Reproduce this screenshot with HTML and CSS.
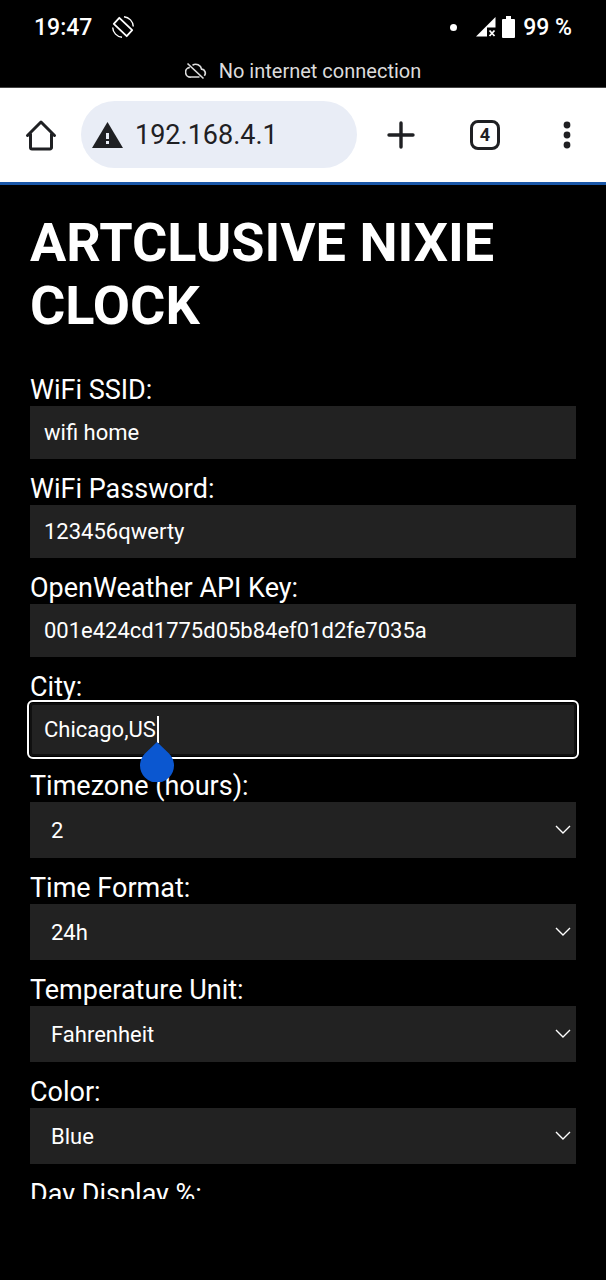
FILE: index.html
```html
<!DOCTYPE html>
<html lang="en">
<head>
  <meta charset="UTF-8">
  <meta name="viewport" content="width=device-width, initial-scale=1.0">
  <title>Artclusive Nixie Clock</title>
  <link rel="stylesheet" href="styles.css">
</head>
<body>
  <!-- Status bar -->
  <header class="status-bar">
    <div class="status-row">
      <span class="status-time">19:47</span>
      <svg class="rotate-icon" width="24" height="24" viewBox="0 0 24 24" fill="none" stroke="currentColor">
        <path d="M8.300 2.800 21.200 15.200 15.700 21.200 2.800 8.800Z" stroke-width="1.800" stroke-linejoin="round"/>
        <path d="M13 1.700A10.300 10.300 0 0 1 22.300 11.500M1.700 12.500A10.300 10.300 0 0 0 11 22.300" stroke-width="1.400"/>
      </svg>
      <div class="status-right">
        <span class="status-dot"></span>
        <svg width="20" height="20" viewBox="0 0 20 20" fill="currentColor">
          <path d="M19.500 0V10.500H11V19.500H0Z"/>
          <path d="m13.500 13.500 5 5.500m0-5.500-5 5.500" stroke="currentColor" stroke-width="1.800"/>
        </svg>
        <svg class="battery-icon" width="13" height="22" viewBox="0 0 13 22" fill="currentColor">
          <path d="M4 0h5v3h3a1 1 0 0 1 1 1v17a1 1 0 0 1-1 1H1a1 1 0 0 1-1-1V4a1 1 0 0 1 1-1h3Z"/>
        </svg>
        <span>99 %</span>
      </div>
    </div>
    <div class="connection">
      <svg width="22" height="18" viewBox="0 0 22 18" fill="none" stroke="currentColor" stroke-width="1.700">
        <path d="M7.500 3.200A6 6 0 0 1 16.600 7.200 4 4 0 0 1 19.300 13.800M4.800 5.400A4.800 4.800 0 0 0 6 15H14.500M2.500 1.500 18.500 16.500"/>
      </svg>
      <span>No internet connection</span>
    </div>
  </header>

  <!-- Browser toolbar -->
  <nav class="toolbar">
    <button class="tool-btn" type="button" aria-label="Home">
      <svg width="32" height="32" viewBox="0 0 32 32" fill="none" stroke="currentColor" stroke-width="3" stroke-linejoin="round" stroke-linecap="round">
        <path d="M2.500 16.500 16 3 29.500 16.500M5.500 15V28.500a1.500 1.500 0 0 0 1.500 1.500H25a1.500 1.500 0 0 0 1.500-1.500V15"/>
      </svg>
    </button>
    <label class="address">
      <svg width="31" height="26" viewBox="0 0 31 26">
        <path d="M15.500 0 31 26H0Z" fill="#1f2023"/>
        <path d="M14 11h3v6h-3zm0 8h3v3h-3z" fill="#e9edf6"/>
      </svg>
      <input type="text" value="192.168.4.1" aria-label="Address">
    </label>
    <button class="tool-btn" type="button" aria-label="New tab">
      <svg width="28" height="28" viewBox="0 0 28 28" stroke="currentColor" stroke-width="3.400" stroke-linecap="round">
        <path d="M14 2v24M2 14h24"/>
      </svg>
    </button>
    <button class="tool-btn" type="button" aria-label="Tabs"><span class="tab-count">4</span></button>
    <button class="tool-btn menu-btn" type="button" aria-label="Menu">
      <svg width="8" height="28" viewBox="0 0 8 28" fill="currentColor">
        <circle cx="4" cy="4" r="3.400"/>
        <circle cx="4" cy="14" r="3.400"/>
        <circle cx="4" cy="24" r="3.400"/>
      </svg>
    </button>
  </nav>

  <!-- Clock settings -->
  <main class="page">
    <h1>ARTCLUSIVE NIXIE CLOCK</h1>
    <form>
      <label for="ssid">WiFi SSID:</label>
      <div class="field">
        <input type="text" id="ssid" value="wifi home">
      </div>

      <label for="password">WiFi Password:</label>
      <div class="field">
        <input type="text" id="password" value="123456qwerty">
      </div>

      <label for="apikey">OpenWeather API Key:</label>
      <div class="field">
        <input type="text" id="apikey" value="001e424cd1775d05b84ef01d2fe7035a">
      </div>

      <label for="city">City:</label>
      <div class="field">
        <input type="text" id="city" class="active" value="Chicago,US">
        <span class="caret"></span>
        <svg class="caret-handle" width="34" height="40" viewBox="0 0 34 40" fill="#0b57d0">
          <path d="M17 0 29 11.500A17 17 0 1 1 5 11.500Z"/>
        </svg>
      </div>

      <label for="timezone">Timezone (hours):</label>
      <div class="field">
        <select id="timezone">
          <option>1</option>
          <option selected>2</option>
          <option>3</option>
        </select>
        <svg class="arrow" width="16" height="10" viewBox="0 0 16 10"><path d="m1 1 7 7 7-7"/></svg>
      </div>

      <label for="format">Time Format:</label>
      <div class="field">
        <select id="format">
          <option>12h</option>
          <option selected>24h</option>
        </select>
        <svg class="arrow" width="16" height="10" viewBox="0 0 16 10"><path d="m1 1 7 7 7-7"/></svg>
      </div>

      <label for="unit">Temperature Unit:</label>
      <div class="field">
        <select id="unit">
          <option>Celsius</option>
          <option selected>Fahrenheit</option>
        </select>
        <svg class="arrow" width="16" height="10" viewBox="0 0 16 10"><path d="m1 1 7 7 7-7"/></svg>
      </div>

      <label for="color">Color:</label>
      <div class="field">
        <select id="color">
          <option>Red</option>
          <option>Green</option>
          <option selected>Blue</option>
        </select>
        <svg class="arrow" width="16" height="10" viewBox="0 0 16 10"><path d="m1 1 7 7 7-7"/></svg>
      </div>

      <label for="day">Day Display %:</label>
      <div class="field">
        <input type="text" id="day">
      </div>
    </form>
  </main>
</body>
</html>
```
FILE: styles.css
```css
* {
  margin: 0;
  padding: 0;
  box-sizing: border-box;
}

html, body {
  height: 100%;
}

body {
  font-family: Roboto, sans-serif;
  background-color: black;
  color: white;
  display: flex;
  flex-direction: column;
  padding-bottom: 81px;
  overflow: hidden;
}

svg {
  display: block;
  flex-shrink: 0;
}

input, select, button {
  font-family: inherit;
  color: inherit;
  border: none;
  border-radius: 0;
  outline: none;
}

/* Status bar */
.status-bar {
  flex-shrink: 0;
  border-bottom: 1px solid #444;
}

.status-row {
  display: flex;
  align-items: center;
  height: 54px;
  padding: 0 34px;
  font-size: 23px;
  font-weight: 500;
}

.rotate-icon {
  margin-left: 19px;
}

.status-right {
  margin-left: auto;
  display: flex;
  align-items: center;
}

.status-dot {
  width: 7px;
  height: 7px;
  margin-right: 19px;
  border-radius: 50%;
  background-color: white;
}

.battery-icon {
  margin: 0 8px 0 6px;
}

.connection {
  display: flex;
  justify-content: center;
  align-items: center;
  gap: 12px;
  height: 33px;
  font-size: 20px;
  color: #dcdcdc;
}

/* Browser toolbar */
.toolbar {
  flex-shrink: 0;
  display: flex;
  align-items: center;
  height: 97px;
  padding-bottom: 1px;
  background-color: white;
  border-bottom: 3px solid #1a57a8;
  color: #1f2023;
}

.tool-btn {
  display: flex;
  justify-content: center;
  align-items: center;
  width: 84px;
  height: 68px;
  background: transparent;
  cursor: pointer;
}

.tool-btn:first-child {
  width: 81px;
}

.menu-btn {
  width: 79px;
}

.address {
  flex: 1;
  min-width: 0;
  display: flex;
  align-items: center;
  gap: 12px;
  height: 67px;
  margin-right: 2px;
  padding: 0 11px;
  border-radius: 34px;
  background-color: #e9edf6;
}

.address input {
  flex: 1;
  min-width: 0;
  background: transparent;
  font-size: 27px;
}

.tab-count {
  width: 30px;
  height: 30px;
  border: 3px solid currentColor;
  border-radius: 8px;
  font-size: 18px;
  font-weight: 700;
  line-height: 24px;
  text-align: center;
}

/* Settings page */
.page {
  flex: 1;
  min-height: 0;
  overflow: hidden;
  padding: 26px 30px 0;
}

h1 {
  font-size: 54px;
  line-height: 63px;
  margin-bottom: 37px;
}

form label {
  display: block;
  font-size: 27px;
  line-height: 32px;
}

.field {
  position: relative;
  margin-bottom: 14px;
}

.field input, .field select {
  display: block;
  width: 100%;
  background-color: #222;
  font-size: 22px;
}

.field input {
  height: 53px;
  padding: 0 14px;
}

.field select {
  appearance: none;
  height: 56px;
  padding: 0 21px;
}

.field input:focus, .field input.active {
  border-radius: 3px;
  outline: 2px solid white;
  outline-offset: 1px;
  box-shadow: inset 0 0 0 2px #101010;
}

.arrow {
  position: absolute;
  right: 5px;
  top: 23px;
  fill: none;
  stroke: white;
  stroke-width: 1.4;
  pointer-events: none;
}

/* Text cursor with its drag handle */
.caret {
  position: absolute;
  left: 127px;
  top: 13px;
  width: 2px;
  height: 27px;
  background-color: white;
}

.caret-handle {
  position: absolute;
  left: 110px;
  top: 39px;
  z-index: 1;
}
```
